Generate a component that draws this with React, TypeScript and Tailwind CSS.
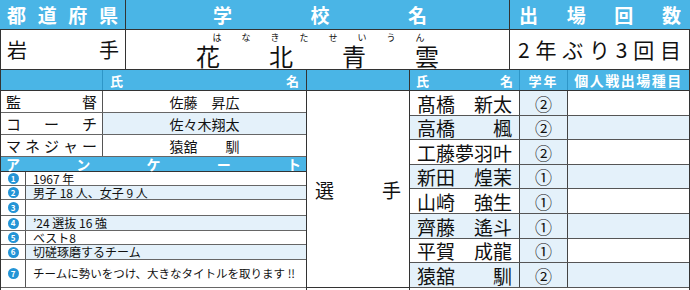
import React from "react";

const staff = [
  { role: ["監", "督"], name: "佐藤　昇広", alt: false },
  { role: ["コ", "ー", "チ"], name: "佐々木翔太", alt: true },
  { role: ["マ", "ネ", "ジ", "ャ", "ー"], name: "猿舘　　馴", alt: false },
];

const survey = [
  { n: 1, text: "1967 年", h: "h-[14px]" },
  { n: 2, text: "男子 18 人、女子 9 人", h: "h-[14px]" },
  { n: 3, text: "", h: "h-[16px]" },
  { n: 4, text: "’24 選抜 16 強", h: "h-[15px]" },
  { n: 5, text: "ベスト8", h: "h-[14px]" },
  { n: 6, text: "切磋琢磨するチーム", h: "h-[15px]" },
  { n: 7, text: "チームに勢いをつけ、大きなタイトルを取ります !!", h: "h-[28px]" },
];

const players = [
  { name: "髙橋　新太", grade: "②", h: "h-[25px]" },
  { name: "高橋　　楓", grade: "②", h: "h-[24px]" },
  { name: "工藤夢羽叶", grade: "②", h: "h-[25px]" },
  { name: "新田　煌茉", grade: "①", h: "h-[24px]" },
  { name: "山崎　強生", grade: "①", h: "h-[25px]" },
  { name: "齊藤　遙斗", grade: "①", h: "h-[25px]" },
  { name: "平賀　成龍", grade: "①", h: "h-[24px]" },
  { name: "猿舘　　馴", grade: "②", h: "h-[25px]" },
];

const ruby = ["は", "な", "き", "た", "せ", "い", "う", "ん"];
const school = ["花", "北", "青", "雲"];

function Spread({ chars }: { chars: string[] }) {
  return (
    <>
      {chars.map((c, i) => (
        <span key={i}>{c}</span>
      ))}
    </>
  );
}

export default function App() {
  return (
    <div className="w-[690px] h-[290px] overflow-hidden bg-white text-[#111] font-['Noto_Sans_CJK_JP','Noto_Sans',sans-serif]">
      {/* header row */}
      <div className="flex h-[30px] bg-[#4ab5e6] text-white font-bold text-[19px] leading-none border-b border-[#333]">
        <div className="flex w-[126px] items-center justify-between px-[7px] border-r border-[#333]">
          <Spread chars={["都", "道", "府", "県"]} />
        </div>
        <div className="flex w-[384px] items-center justify-between pl-[87px] pr-[82px] border-r border-[#333]">
          <Spread chars={["学", "校", "名"]} />
        </div>
        <div className="flex flex-1 items-center justify-between px-[9px]">
          <Spread chars={["出", "場", "回", "数"]} />
        </div>
      </div>

      {/* school row */}
      <div className="flex h-[40px] border-b border-l border-[#333]">
        <div className="flex w-[125px] items-center justify-between px-[6px] text-[20px] leading-none border-r border-[#333]">
          <Spread chars={["岩", "手"]} />
        </div>
        <div className="flex w-[384px] flex-col border-r border-[#333]">
          <div className="ml-[86px] mt-[3px] flex h-[10px] gap-[19px] text-[9px] leading-[10px]">
            {ruby.map((r) => (
              <span key={r} className="w-[10px] text-center">{r}</span>
            ))}
          </div>
          <div className="ml-[70px] mt-[1px] flex h-[24px] gap-[49px] text-[24px] leading-[24px]">
            {school.map((k) => (
              <span key={k}>{k}</span>
            ))}
          </div>
        </div>
        <div className="flex flex-1 items-center justify-between px-[8px] text-[21px] leading-none border-r border-[#333]">
          <Spread chars={["2", "年", "ぶ", "り", "3", "回", "目"]} />
        </div>
      </div>

      {/* lower section */}
      <div className="flex h-[220px] border-l border-[#333]">
        {/* staff + survey */}
        <div className="flex w-[306px] flex-col border-r border-[#333]">
          <div className="flex h-[21px] bg-[#4ab5e6] text-white font-bold text-[13px] leading-none border-b border-[#333]">
            <div className="w-[102px] border-r border-[#2e96c8]" />
            <div className="flex flex-1 items-center justify-between px-[7px]">
              <span>氏</span>
              <span>名</span>
            </div>
          </div>
          {staff.map((s) => (
            <div key={s.name} className="flex h-[22px] border-b border-[#666]">
              <div className="flex w-[102px] items-center justify-between px-[5px] text-[15px] leading-none border-r border-[#555]">
                <Spread chars={s.role} />
              </div>
              <div
                className={
                  s.alt
                    ? "flex flex-1 items-center justify-center whitespace-pre bg-[#e4f1fa] text-[14px] leading-none"
                    : "flex flex-1 items-center justify-center whitespace-pre text-[14px] leading-none"
                }
              >
                {s.name}
              </div>
            </div>
          ))}
          <div className="flex h-[15px] items-center justify-between bg-[#4ab5e6] px-[5px] text-white font-bold text-[14px] leading-none border-b border-[#333]">
            <Spread chars={["ア", "ン", "ケ", "ー", "ト"]} />
          </div>
          {survey.map((q) => (
            <div key={q.n} className={`flex ${q.h} border-b border-[#666]`}>
              <div className="flex w-[25px] items-center justify-center border-r border-[#555]">
                <span className="flex h-[11px] w-[11px] items-center justify-center rounded-full bg-[#2394d6] text-[8px] font-bold leading-none text-white">
                  {q.n}
                </span>
              </div>
              <div
                className={
                  q.n % 2 === 0
                    ? "flex flex-1 items-center whitespace-nowrap bg-[#e4f1fa] pl-[7px] text-[12px] leading-none"
                    : q.n === 7
                      ? "flex flex-1 items-center whitespace-nowrap pl-[7px] text-[11.5px] leading-none"
                      : "flex flex-1 items-center whitespace-nowrap pl-[7px] text-[12px] leading-none"
                }
              >
                {q.text}
              </div>
            </div>
          ))}
        </div>

        {/* 選手 column */}
        <div className="flex w-[103px] flex-col border-r border-[#333]">
          <div className="h-[21px] bg-[#4ab5e6] border-b border-[#333]" />
          <div className="flex h-[197px] items-center justify-between px-[8px] text-[19px] leading-none border-b border-[#333]">
            <span>選</span>
            <span>手</span>
          </div>
        </div>

        {/* players */}
        <div className="flex flex-1 flex-col border-r border-[#333]">
          <div className="flex h-[21px] bg-[#4ab5e6] text-white font-bold text-[13px] leading-none border-b border-[#333]">
            <div className="flex w-[110px] items-center justify-between px-[6px] border-r border-[#2e96c8]">
              <span>氏</span>
              <span>名</span>
            </div>
            <div className="flex w-[48px] items-center justify-center tracking-[2px] border-r border-[#2e96c8]">
              学年
            </div>
            <div className="flex flex-1 items-center justify-center text-[14px] tracking-[1.5px]">
              個人戦出場種目
            </div>
          </div>
          {players.map((p, i) => (
            <div key={p.name + i} className={`flex ${p.h} border-b border-[#555]`}>
              <div
                className={
                  i % 2 === 1
                    ? "flex w-[110px] items-center justify-center whitespace-pre bg-[#e4f1fa] text-[19px] leading-none border-r border-[#444]"
                    : "flex w-[110px] items-center justify-center whitespace-pre text-[19px] leading-none border-r border-[#444]"
                }
              >
                {p.name}
              </div>
              <div className="flex w-[48px] items-center justify-center bg-[#e4f1fa] text-[17px] leading-none border-r border-[#444]">
                {p.grade}
              </div>
              <div className={i % 2 === 1 ? "flex-1 bg-[#e4f1fa]" : "flex-1"} />
            </div>
          ))}
        </div>
      </div>
    </div>
  );
}
